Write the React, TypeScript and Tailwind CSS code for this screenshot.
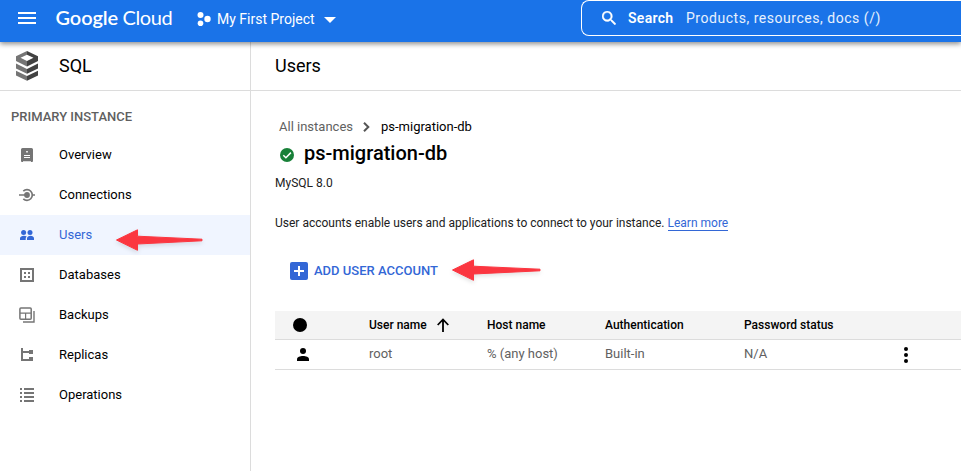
import type { ReactNode } from "react";

type NavItem = { label: string; icon: ReactNode; active?: boolean };

function NavIcon({ children, crisp }: { children: ReactNode; crisp?: boolean }) {
  return (
    <svg
      width="18"
      height="18"
      viewBox="0 0 18 18"
      fill="currentColor"
      shapeRendering={crisp ? "crispEdges" : "auto"}
      className="ml-[18px] shrink-0"
    >
      {children}
    </svg>
  );
}

const navItems: NavItem[] = [
  {
    label: "Overview",
    icon: (
      <NavIcon>
        <path d="M4.500 2h9A1.500 1.500 0 0 1 15 3.500V15a1 1 0 0 1-1 1h-1v-.8H5V16H4a1 1 0 0 1-1-1V3.500A1.500 1.500 0 0 1 4.500 2z" />
        <path d="M8.200 5h1.600v1.500H8.200zM6 9h6v1H6zM6 11h6v1H6z" fill="#fff" />
      </NavIcon>
    ),
  },
  {
    label: "Connections",
    icon: (
      <NavIcon>
        <circle cx="9" cy="9" r="2.900" />
        <path d="M1 8.200h6v1.600H1zM14 8.200h3v1.600h-3z" />
        <path
          d="M5.300 5.200A5.300 5.300 0 1 1 5.300 12.800"
          fill="none"
          stroke="currentColor"
          strokeWidth="1.700"
        />
      </NavIcon>
    ),
  },
  {
    label: "Users",
    active: true,
    icon: (
      <NavIcon>
        <circle cx="5.600" cy="6.400" r="2.500" />
        <circle cx="12" cy="6.400" r="2.500" />
        <path d="M2 14v-1.800c0-1.500 2-2.400 3.900-2.400 1 0 2 .2 2.800.7-.7.600-1 1.200-1 2V14z" />
        <path d="M9 14v-1.700c0-1.600 1.700-2.500 3.500-2.500S16 10.700 16 12.300V14z" />
      </NavIcon>
    ),
  },
  {
    label: "Databases",
    icon: (
      <NavIcon crisp>
        <path d="M2 2h14v14H2zM4 4v10h10V4z" fillRule="evenodd" />
        <path d="M6 6h2v2H6zM10 6h2v2h-2zM6 10h2v2H6zM10 10h2v2h-2z" />
      </NavIcon>
    ),
  },
  {
    label: "Backups",
    icon: (
      <NavIcon>
        <rect x="1.900" y="1.900" width="11.300" height="11.300" rx="1" fill="none" stroke="currentColor" strokeWidth="1.500" />
        <path d="M2 6.400h11v1.300H2zM7 7h1.200v6H7z" />
        <path d="M16 5v11H5" fill="none" stroke="currentColor" strokeWidth="1.400" />
      </NavIcon>
    ),
  },
  {
    label: "Replicas",
    icon: (
      <NavIcon crisp>
        <path d="M3 2h2v3h6V4h4v4h-4V7H5v6h6v-2h4v4h-4H3z" />
      </NavIcon>
    ),
  },
  {
    label: "Operations",
    icon: (
      <NavIcon crisp>
        <path d="M2 2h2v2H2zM6 2h10v2H6zM2 6h2v2H2zM6 6h10v2H6zM2 10h2v2H2zM6 10h10v2H6zM2 14h2v2H2zM6 14h10v2H6z" />
      </NavIcon>
    ),
  },
];

function SqlLogo() {
  return (
    <svg width="22" height="30" viewBox="0 0 22 30" className="ml-4 shrink-0">
      <path d="M11 0 0 5.200v4.900l11 5.400V10L4.500 6.800 11 3.700z" fill="#757575" />
      <path d="M11 0l11 5.200v4.900l-11 5.400V10l6.500-3.200L11 3.700z" fill="#424242" />
      <path d="M0 12.600l11 5.300v4.800L0 17.400zM0 19.700 11 25v4.800L0 24.500z" fill="#757575" />
      <path d="M22 12.600l-11 5.300v4.800l11-5.300zM22 19.700 11 25v4.800l11-5.300z" fill="#424242" />
    </svg>
  );
}

function Arrow({ className, width = 90 }: { className: string; width?: number }) {
  const tail = width - 1;
  return (
    <svg
      width={width + 2}
      height="26"
      viewBox={`0 0 ${width + 2} 26`}
      className={`absolute drop-shadow-[0_2px_2px_rgba(0,0,0,0.12)] ${className}`}
    >
      <path
        d={`M1.500 12 22.500 1.800v6.400L${tail} 11.200v1.600L22.500 16v6.300z`}
        fill="#fb3640"
        stroke="#fb3640"
        strokeWidth="1"
        strokeLinejoin="round"
      />
    </svg>
  );
}

function Header() {
  return (
    <header className="relative z-10 flex h-[42px] shrink-0 items-start bg-[#1a73e8] text-white shadow-[0_2px_5px_rgba(0,0,0,0.45)]">
      <svg width="18" height="12" viewBox="0 0 18 12" fill="#fff" className="mt-3 ml-[18px] shrink-0">
        <path d="M0 0h18v2H0zM0 5h18v2H0zM0 10h18v2H0z" />
      </svg>
      <div className="ml-[19.500px] flex w-[141.500px] items-baseline gap-[4px] font-[Lato,sans-serif] text-[20px] leading-[35px] whitespace-nowrap">
        <span className="w-[63px] font-semibold tracking-[-0.100px]">Google</span>
        <span className="tracking-[-0.400px]">Cloud</span>
      </div>
      <svg width="14" height="14" viewBox="0 0 14 14" fill="#fff" className="mt-3 shrink-0">
        <circle cx="3.500" cy="3" r="3" />
        <circle cx="10.500" cy="7" r="3.200" />
        <circle cx="3.500" cy="11.200" r="2.800" />
      </svg>
      <span className="ml-1.5 w-[106.500px] text-[14px] leading-[39px] whitespace-nowrap">My First Project</span>
      <svg width="12" height="6" viewBox="0 0 12 6" fill="#fff" className="mt-[17px] shrink-0">
        <path d="M0 0h12L6 6z" />
      </svg>
      <div className="ml-auto flex h-9 w-[380px] shrink-0 items-center rounded-l-lg border border-r-0 border-white">
        <svg width="14" height="14" viewBox="3 3 17.500 17.500" fill="#fff" className="ml-5 shrink-0">
          <path
            d="M15.500 14h-.79l-.28-.27A6.470 6.470 0 0 0 16 9.500 6.500 6.500 0 1 0 9.500 16c1.610 0 3.090-.59 4.230-1.570l.27.28v.79l5 4.990L20.490 19zm-6 0C7.010 14 5 11.990 5 9.500S7.010 5 9.500 5 14 7.010 14 9.500 11.990 14 9.500 14z"
            stroke="#fff"
            strokeWidth=".5"
          />
        </svg>
        <span className="ml-[12px] w-[58px] text-[14px] font-semibold tracking-[0.300px]">Search</span>
        <span className="text-[14px] tracking-[0.530px] whitespace-nowrap text-white/90">Products, resources, docs (/)</span>
      </div>
    </header>
  );
}

function Sidebar() {
  return (
    <aside className="flex w-[251px] shrink-0 flex-col border-r border-[#dcdcdc]">
      <div className="flex h-[49px] items-center border-b border-[#dcdcdc]">
        <SqlLogo />
        <span className="ml-[21px] pb-0.5 text-[18px]">SQL</span>
      </div>
      <div className="flex h-11 items-end pb-[9px] pl-[11px] text-[13px] leading-[18px] font-medium text-[#5f5f5f]">
        PRIMARY INSTANCE
      </div>
      <nav>
        {navItems.map((item) => (
          <div
            key={item.label}
            className={`flex h-10 items-center text-[13px] ${item.active ? "bg-[#f0f5ff] text-[#3367d6]" : "text-[#757575]"}`}
          >
            {item.icon}
            <span className={`ml-[23px] ${item.active ? "" : "text-black"}`}>{item.label}</span>
          </div>
        ))}
      </nav>
    </aside>
  );
}

const columns = "grid grid-cols-[94px_118px_118px_139px_1fr] items-center";

function UsersTable() {
  return (
    <div className="ml-6">
      <div className={`${columns} h-[29px] border-b border-[#dcdcdc] bg-[#f4f4f4] text-[12px] font-medium`}>
        <span className="ml-[18px] size-3.5 rounded-full bg-black" />
        <span className="flex items-center">
          <span className="w-[68px]">User name</span>
          <svg width="12" height="14" viewBox="0 0 12 14" fill="none" stroke="#000" strokeWidth="1.800">
            <path d="M6 14V2M.7 7 6 1.500 11.300 7" />
          </svg>
        </span>
        <span>Host name</span>
        <span>Authentication</span>
        <span>Password status</span>
      </div>
      <div className={`${columns} h-[30px] border-b border-[#dcdcdc] text-[13px] leading-[18px] text-[#616161]`}>
        <svg width="12" height="13" viewBox="0 0 12 13" fill="#000" className="ml-[22px]">
          <circle cx="6" cy="3" r="3" />
          <path d="M0 13v-1.800C0 9 3 8 6 8s6 1 6 3.200V13z" />
        </svg>
        <span className="pb-0.5">root</span>
        <span className="pb-0.5">% (any host)</span>
        <span className="pb-0.5">Built-in</span>
        <span className="flex items-center justify-between">
          <span className="pb-0.5">N/A</span>
          <svg width="4" height="16" viewBox="0 0 4 16" fill="#000" className="mr-[53px]">
            <circle cx="2" cy="2" r="2" />
            <circle cx="2" cy="8" r="2" />
            <circle cx="2" cy="14" r="2" />
          </svg>
        </span>
      </div>
    </div>
  );
}

function Main() {
  return (
    <main className="flex min-w-0 flex-1 flex-col">
      <div className="flex h-[49px] items-center border-b border-[#dcdcdc] pb-0.5 pl-6 text-[18px]">Users</div>
      <div className="mt-[26px] flex h-5 items-center pl-7 text-[13px] whitespace-nowrap">
        <span className="w-[84px] text-[#616161]">All instances</span>
        <svg width="7" height="10" viewBox="0 0 7 10" fill="none" stroke="#555" strokeWidth="2">
          <path d="M1 .8 5.300 5 1 9.200" />
        </svg>
        <span className="ml-[11px]">ps-migration-db</span>
      </div>
      <div className="mt-0.5 flex h-7 items-center pl-[29px]">
        <svg width="14" height="14" viewBox="0 0 14 14" className="mt-[3px]">
          <circle cx="7" cy="7" r="7" fill="#188038" />
          <path d="M3.300 7.200 5.900 9.700 10.900 4.600" fill="none" stroke="#fff" strokeWidth="1.500" />
        </svg>
        <h1 className="ml-2.5 text-[20px] font-medium">ps-migration-db</h1>
      </div>
      <div className="mt-[7px] pl-6 text-[12px] leading-[18px] text-[#212121]">MySQL 8.0</div>
      <p className="mt-[22px] pl-6 text-[12px] leading-[18px] whitespace-nowrap text-[#212121]">
        User accounts enable users and applications to connect to your instance.{" "}
        <a className="border-b border-[#3367d6] text-[#3367d6]">Learn more</a>
      </p>
      <div className="mt-[29px] mb-[30px] flex h-5 items-center pl-[39px] text-[#3367d6]">
        <svg width="18" height="18" viewBox="0 0 18 18">
          <rect width="18" height="18" rx="2" fill="#3367d6" />
          <path d="M8 4h2v4h4v2h-4v4H8v-4H4V8h4z" fill="#fff" />
        </svg>
        <span className="ml-[6px] text-[13px] font-medium whitespace-nowrap">ADD USER ACCOUNT</span>
      </div>
      <UsersTable />
    </main>
  );
}

export default function App() {
  return (
    <div className="relative flex h-[471px] w-[961px] flex-col overflow-hidden bg-white font-[Roboto,sans-serif] text-black">
      <Header />
      <div className="flex min-h-0 flex-1">
        <Sidebar />
        <Main />
      </div>
      <Arrow className="top-[228px] left-[115px]" width={88} />
      <Arrow className="top-[258px] left-[451px]" />
    </div>
  );
}
